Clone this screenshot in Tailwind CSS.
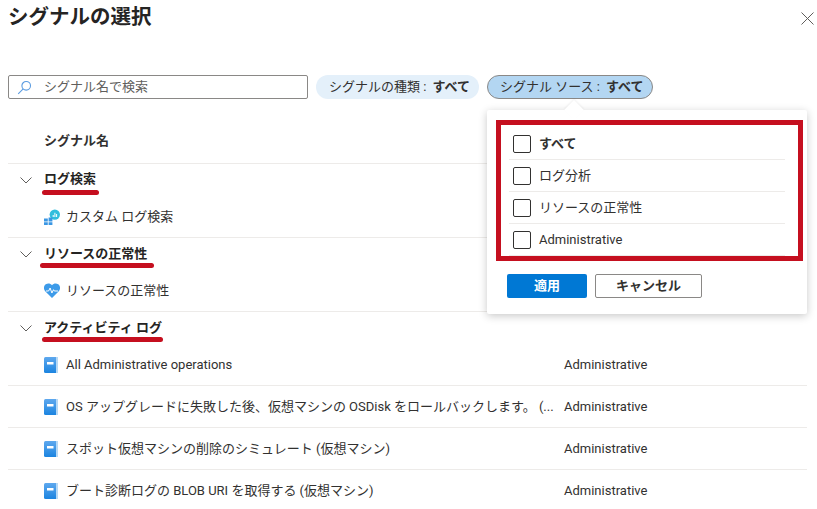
<!DOCTYPE html>
<html lang="ja">
<head>
  <meta charset="UTF-8">
  <title>シグナルの選択</title>
  <script src="https://cdn.jsdelivr.net/npm/@tailwindcss/browser@4"></script>
</head>
<body class="bg-white h-[509px] overflow-hidden text-[13px] text-[#323130] font-['Roboto','Noto_Sans_CJK_JP',sans-serif]">
  <div class="relative h-[509px] overflow-hidden pl-2 pr-[10px]">
    <!-- title -->
    <div class="h-[75px] flex justify-between">
      <h1 class="text-[20.500px] leading-[36px] font-semibold text-[#252423] mt-[-1px]">シグナルの選択</h1>
      <svg class="mt-[12px] mr-[-7px]" width="13" height="13" viewBox="0 0 13 13" fill="none" stroke="#605e5c" stroke-width="1"><path d="M.5.5l12 12M12.5.5l-12 12"/></svg>
    </div>

    <!-- filters -->
    <div class="flex gap-2 h-6">
      <div class="w-[300px] border border-[#8a8886] rounded-[2px] flex items-center pl-2 gap-3 text-[#605e5c]">
        <svg width="15" height="15" viewBox="0 0 15 15" fill="none" stroke="#5a9be0" stroke-width="1.1"><circle cx="9.200" cy="5.800" r="4.300"/><path d="M6.200 8.900L1.200 13.800"/></svg>
        <span>シグナル名で検索</span>
      </div>
      <div class="w-[163px] rounded-full bg-[#e4f0fa] flex items-center pl-[13px] whitespace-nowrap">シグナルの種類 :<b class="font-semibold ml-[6px]">すべて</b></div>
      <div class="w-[166px] rounded-full bg-[#b3d6f2] border border-[#8a8886] flex items-center pl-3 whitespace-nowrap">シグナル ソース :<b class="font-semibold ml-[6px]">すべて</b></div>
    </div>

    <!-- table -->
    <div class="mt-[20px]">
      <div class="h-[45px] pl-9 flex items-center font-semibold border-b border-[#edebe9]">シグナル名</div>

      <div class="h-8 flex items-center font-semibold text-[#252423]">
        <svg class="ml-3 mr-3" width="12" height="12" viewBox="0 0 12 12" fill="none" stroke="#605e5c"><path d="M.5 3.500L6 9l5.500-5.500"/></svg>
        <span class="relative mt-[-2px]">ログ検索<i class="absolute left-[-2px] top-[21px] w-[57px] h-[5px] rounded-full bg-[#c50f1f]"></i></span>
      </div>
      <div class="h-[42px] flex items-center pl-9 gap-[6px] border-b border-[#edebe9]">
        <svg width="16" height="16" viewBox="0 0 16 16"><circle cx="10.800" cy="5.600" r="5.200" fill="#32bedd"/><path d="M8.700 8V6h1v2zM10.400 8V3.800h1V8zM12.100 8V5h1v3z" fill="#fff"/><path d="M0 9.500h3.800v3H0zM4.600 8.500h3.800v4H4.600zM0 13.200h3.800V16H0zM4.600 13.200h3.800V16H4.600z" fill="#3b97e3"/></svg>
        <span>カスタム ログ検索</span>
      </div>

      <div class="h-8 flex items-center font-semibold text-[#252423]">
        <svg class="ml-3 mr-3" width="12" height="12" viewBox="0 0 12 12" fill="none" stroke="#605e5c"><path d="M.5 3.500L6 9l5.500-5.500"/></svg>
        <span class="relative">リソースの正常性<i class="absolute left-[-4px] top-[19px] w-[114px] h-[5px] rounded-full bg-[#c50f1f]"></i></span>
      </div>
      <div class="h-[42px] flex items-center pl-9 gap-[6px] border-b border-[#edebe9]">
        <svg width="16" height="15" viewBox="0 0 16 15"><path d="M8 15L1.200 8.200C-.8 6-.3 2.800 1.800 1.300 3.800-.1 6.500.3 8 2.300 9.500.3 12.200-.1 14.200 1.300c2.100 1.500 2.600 4.700.6 6.900z" fill="#3d9be9"/><path d="M2 8h2.600l1.500-3 1.800 5 1.600-3.300.8 1.300H14" fill="none" stroke="#fff" stroke-width="1"/></svg>
        <span>リソースの正常性</span>
      </div>

      <div class="h-8 flex items-center font-semibold text-[#252423]">
        <svg class="ml-3 mr-3" width="12" height="12" viewBox="0 0 12 12" fill="none" stroke="#605e5c"><path d="M.5 3.500L6 9l5.500-5.500"/></svg>
        <span class="relative">アクティビティ ログ<i class="absolute left-[-2px] top-[19px] w-[121px] h-[5px] rounded-full bg-[#c50f1f]"></i></span>
      </div>

      <div class="h-[42px] flex items-center pl-9 border-b border-[#edebe9]">
        <svg class="mr-[7px]" width="15" height="16" viewBox="0 0 15 16"><defs><linearGradient id="book" x1="0" y1="0" x2="0" y2="1"><stop offset="0" stop-color="#5ea8ee"/><stop offset="1" stop-color="#1b84e0"/></linearGradient></defs><rect width="14" height="16" rx="1.500" fill="url(#book)"/><rect x="12" width="2" height="16" fill="#b5d8f5"/><rect x="3" y="5" width="6.500" height="2.500" fill="#fff"/></svg>
        <span class="w-[498px] whitespace-nowrap">All Administrative operations</span>
        <span>Administrative</span>
      </div>
      <div class="h-[42px] flex items-center pl-9 border-b border-[#edebe9]">
        <svg class="mr-[7px]" width="15" height="16" viewBox="0 0 15 16"><rect width="14" height="16" rx="1.500" fill="url(#book)"/><rect x="12" width="2" height="16" fill="#b5d8f5"/><rect x="3" y="5" width="6.500" height="2.500" fill="#fff"/></svg>
        <span class="w-[498px] whitespace-nowrap">OS アップグレードに失敗した後、仮想マシンの OSDisk をロールバックします。 (...</span>
        <span>Administrative</span>
      </div>
      <div class="h-[42px] flex items-center pl-9 border-b border-[#edebe9]">
        <svg class="mr-[7px]" width="15" height="16" viewBox="0 0 15 16"><rect width="14" height="16" rx="1.500" fill="url(#book)"/><rect x="12" width="2" height="16" fill="#b5d8f5"/><rect x="3" y="5" width="6.500" height="2.500" fill="#fff"/></svg>
        <span class="w-[498px] whitespace-nowrap">スポット仮想マシンの削除のシミュレート (仮想マシン)</span>
        <span>Administrative</span>
      </div>
      <div class="h-[42px] flex items-center pl-9">
        <svg class="mr-[7px]" width="15" height="16" viewBox="0 0 15 16"><rect width="14" height="16" rx="1.500" fill="url(#book)"/><rect x="12" width="2" height="16" fill="#b5d8f5"/><rect x="3" y="5" width="6.500" height="2.500" fill="#fff"/></svg>
        <span class="w-[498px] whitespace-nowrap">ブート診断ログの BLOB URI を取得する (仮想マシン)</span>
        <span>Administrative</span>
      </div>
    </div>

    <!-- popup -->
    <div class="absolute left-[487px] top-[110px] w-[320px] h-[204px] bg-white rounded-[2px] shadow-[0_2px_8px_rgba(0,0,0,0.22)]">
      <div class="absolute left-[80px] top-[-7px] w-[14px] h-[14px] rotate-45 bg-white shadow-[-1px_-1px_2px_rgba(0,0,0,0.06)]"></div>
      <div class="relative pl-[22px] pr-[22px] pt-[18px]">
        <div class="h-8 flex items-center gap-2 pl-1 border-b border-[#edebe9] font-semibold">
          <span class="w-[18px] h-[18px] border border-[#323130] rounded-[2px]"></span>すべて
        </div>
        <div class="h-8 flex items-center gap-2 pl-1 border-b border-[#edebe9]">
          <span class="w-[18px] h-[18px] border border-[#323130] rounded-[2px]"></span>ログ分析
        </div>
        <div class="h-8 flex items-center gap-2 pl-1 border-b border-[#edebe9]">
          <span class="w-[18px] h-[18px] border border-[#323130] rounded-[2px]"></span>リソースの正常性
        </div>
        <div class="h-8 flex items-center gap-2 pl-1 border-b border-[#edebe9]">
          <span class="w-[18px] h-[18px] border border-[#323130] rounded-[2px]"></span>Administrative
        </div>
      </div>
      <div class="flex gap-2 pl-5 mt-[18px]">
        <button class="w-20 h-6 bg-[#0078d4] text-white font-semibold rounded-[2px]">適用</button>
        <button class="w-[107px] h-6 border border-[#8a8886] font-semibold rounded-[2px]">キャンセル</button>
      </div>
      <div class="absolute left-[9px] top-[10px] w-[307px] h-[141px] border-[5px] border-[#c50f1f]"></div>
    </div>
  </div>
</body>
</html>
